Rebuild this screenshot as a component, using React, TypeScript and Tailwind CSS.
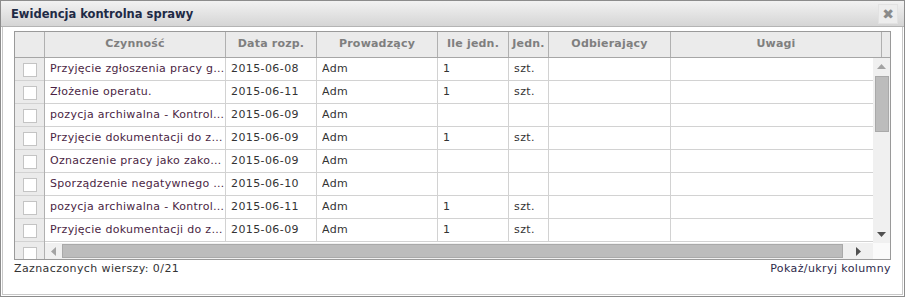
import React from 'react';

interface Row {
  czynnosc: string;
  data: string;
  prowadzacy: string;
  ile: string;
  jedn: string;
}

const rows: Row[] = [
  { czynnosc: 'Przyjęcie zgłoszenia pracy geodezyjnej', data: '2015-06-08', prowadzacy: 'Adm', ile: '1', jedn: 'szt.' },
  { czynnosc: 'Złożenie operatu.', data: '2015-06-11', prowadzacy: 'Adm', ile: '1', jedn: 'szt.' },
  { czynnosc: 'pozycja archiwalna - Kontrola operatu', data: '2015-06-09', prowadzacy: 'Adm', ile: '', jedn: '' },
  { czynnosc: 'Przyjęcie dokumentacji do zasobu', data: '2015-06-09', prowadzacy: 'Adm', ile: '1', jedn: 'szt.' },
  { czynnosc: 'Oznaczenie pracy jako zakończonej', data: '2015-06-09', prowadzacy: 'Adm', ile: '', jedn: '' },
  { czynnosc: 'Sporządzenie negatywnego protokołu', data: '2015-06-10', prowadzacy: 'Adm', ile: '', jedn: '' },
  { czynnosc: 'pozycja archiwalna - Kontrola operatu', data: '2015-06-11', prowadzacy: 'Adm', ile: '1', jedn: 'szt.' },
  { czynnosc: 'Przyjęcie dokumentacji do zasobu', data: '2015-06-09', prowadzacy: 'Adm', ile: '1', jedn: 'szt.' },
  { czynnosc: '', data: '', prowadzacy: '', ile: '', jedn: '' },
];

// column widths (px, border included)
const cols = [
  { key: 'czynnosc', label: 'Czynność', w: 'w-[181px]' },
  { key: 'data', label: 'Data rozp.', w: 'w-[91px]' },
  { key: 'prowadzacy', label: 'Prowadzący', w: 'w-[121px]' },
  { key: 'ile', label: 'Ile jedn.', w: 'w-[71px]' },
  { key: 'jedn', label: 'Jedn.', w: 'w-[40px]' },
  { key: 'odb', label: 'Odbierający', w: 'w-[122px]' },
  { key: 'uwagi', label: 'Uwagi', w: 'w-[211px]' },
];

function Checkbox() {
  return <div className="w-[14px] h-[14px] bg-white border border-[#c4c4c4]" />;
}

function Cell({ w, children, cls = 'pr-[3px]' }: { w: string; children?: React.ReactNode; cls?: string }) {
  return (
    <div className={`${w} shrink-0 h-full border-r border-[#d2d2d2] pl-[5px] flex items-center overflow-hidden ${cls}`}>
      <span className="truncate">{children}</span>
    </div>
  );
}

export default function App() {
  return (
    <div className="w-[905px] h-[300px] bg-white" style={{ fontFamily: '"DejaVu Sans", Verdana, sans-serif' }}>
      <div className="w-[905px] h-[297px] border border-[#8c8c8c] flex flex-col bg-white">
        {/* Title bar */}
        <div className="h-[26px] shrink-0 flex items-center justify-between pl-[10px] pr-[6px] pt-[2px] bg-gradient-to-b from-[#f2f2f2] to-[#d5d5d5] border-b border-[#b4b4b4]">
          <span className="text-[11.5px] font-bold text-[#1e2a45]">Ewidencja kontrolna sprawy</span>
          <div className="w-[20px] h-[20px] -mt-[2px] flex items-center justify-center bg-[#ededed] border border-[#e2e2e2] text-[#8a8a8a] text-[14px] font-bold leading-none">
            ✖
          </div>
        </div>

        {/* Content */}
        <div className="flex-1 mx-px mb-px border-x border-b border-[#c8c8c8] px-[11px] pt-[4px] flex flex-col tracking-[0.4px]">
          <div className="h-[229px] border border-[#9a9a9a] flex flex-col overflow-hidden text-[11px]">
            {/* Header */}
            <div className="h-[26px] shrink-0 flex bg-[#ebebeb] border-b border-[#a6a6a6] font-bold text-[#7f7f7f] tracking-[0.2px]">
              <div className="w-[30px] shrink-0 border-r border-[#b0b0b0]" />
              {cols.map((c) => (
                <div key={c.key} className={`${c.w} shrink-0 border-r border-[#b0b0b0] flex items-center justify-center`}>
                  {c.label}
                </div>
              ))}
              <div className="flex-1" />
            </div>

            {/* Body */}
            <div className="flex-1 flex min-h-0">
              {/* frozen checkbox column */}
              <div className="w-[30px] shrink-0 bg-[#ebebeb] border-r border-[#b0b0b0] flex flex-col overflow-hidden">
                {rows.map((_, i) => (
                  <div key={i} className="h-[23px] shrink-0 border-b border-[#d2d2d2] flex items-center justify-center pt-px">
                    <Checkbox />
                  </div>
                ))}
              </div>

              <div className="flex-1 flex flex-col min-w-0">
                <div className="flex-1 flex min-h-0">
                  <div className="flex-1 flex flex-col overflow-hidden text-[#333]">
                    {rows.slice(0, 8).map((r, i) => (
                      <div key={i} className="h-[23px] shrink-0 flex border-b border-[#d2d2d2]">
                        <Cell w="w-[181px]" cls="text-[#4b1f44] pr-0 tracking-[0.3px]">{r.czynnosc}</Cell>
                        <Cell w="w-[91px]">{r.data}</Cell>
                        <Cell w="w-[121px]">{r.prowadzacy}</Cell>
                        <Cell w="w-[71px]">{r.ile}</Cell>
                        <Cell w="w-[40px]">{r.jedn}</Cell>
                        <Cell w="w-[122px]" />
                        <Cell w="w-[211px]" />
                      </div>
                    ))}
                  </div>
                  {/* vertical scrollbar */}
                  <div className="w-[17px] shrink-0 bg-[#f0f0f0] flex flex-col items-center">
                    <div className="h-[17px] flex items-center justify-center">
                      <svg width="9" height="5" viewBox="0 0 9 5"><path d="M4.5 0L9 5H0z" fill="#a3a3a3" /></svg>
                    </div>
                    <div className="w-[14px] h-[56px] bg-[#bcbcbc] border border-[#a9a9a9] mt-px" />
                    <div className="flex-1" />
                    <div className="h-[17px] flex items-center justify-center">
                      <svg width="9" height="5" viewBox="0 0 9 5"><path d="M0 0H9L4.5 5z" fill="#505050" /></svg>
                    </div>
                  </div>
                </div>
                {/* horizontal scrollbar */}
                <div className="h-[16px] shrink-0 flex">
                  <div className="flex-1 bg-[#f0f0f0] flex items-center">
                    <div className="w-[17px] h-full flex items-center justify-center">
                      <svg width="5" height="9" viewBox="0 0 5 9"><path d="M5 0V9L0 4.5z" fill="#a3a3a3" /></svg>
                    </div>
                    <div className="h-[14px] w-[781px] bg-[#bcbcbc] border border-[#a9a9a9]" />
                    <div className="flex-1 h-full flex items-center justify-center">
                      <svg width="5" height="9" viewBox="0 0 5 9"><path d="M0 0L5 4.5L0 9z" fill="#505050" /></svg>
                    </div>
                  </div>
                  <div className="w-[17px] bg-[#fafafa]" />
                </div>
              </div>
            </div>
          </div>

          {/* Footer */}
          <div className="flex justify-between text-[11px] text-[#333] mt-[1px]">
            <span>Zaznaczonych wierszy: 0/21</span>
            <span className="text-[#2e2a4a]">Pokaż/ukryj kolumny</span>
          </div>
        </div>
      </div>
    </div>
  );
}
